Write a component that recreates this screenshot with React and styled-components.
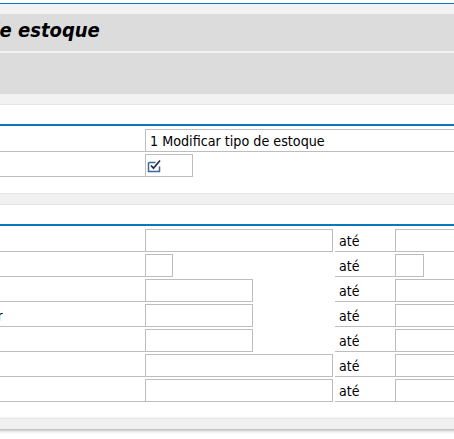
import React from 'react';
import styled, { createGlobalStyle } from 'styled-components';

const SCROLL = 170;

const GlobalStyle = createGlobalStyle`
  html, body {
    margin: 0;
    padding: 0;
    background: #fff;
  }
  body {
    font-family: "DejaVu Sans Condensed", "DejaVu Sans", sans-serif;
    font-size: 14px;
    color: #000;
  }
`;

const Viewport = styled.div`
  width: 454px;
  height: 439px;
  overflow: hidden;
  padding-top: 3px;
  box-sizing: border-box;
`;
const Canvas = styled.div`
  margin-left: -${SCROLL}px;
  width: ${SCROLL + 700}px;
`;
const Header = styled.header`
  border-top: 1px solid #0b76bb;
  background: #f2f2f2;
  padding: 10px 0;
  border-bottom: 1px solid #e5e5e5;
`;
const TitleBar = styled.div`
  height: 37px;
  background: #dcdcdc;
  padding-left: 9px;
`;
const Title = styled.h1`
  margin: 0;
  font-family: "DejaVu Sans Condensed", "DejaVu Sans", sans-serif;
  font-weight: bold;
  font-style: italic;
  font-size: 20px;
  line-height: 32px;
  color: #000;
  white-space: nowrap;
`;
const Toolbar = styled.div`
  height: 41px;
  margin-top: 2px;
  background: #dcdcdc;
`;
const Section = styled.section`
  margin-top: 19px;
  border-top: 2px solid #0b76bb;
  padding-top: 1px;
`;
const Row = styled.div`
  display: flex;
  align-items: flex-end;
  padding-top: 2px;
`;
const Label = styled.label`
  box-sizing: border-box;
  flex: 0 0 ${SCROLL + 145}px;
  height: 23px;
  border-bottom: 1px solid #bdbdbd;
  padding: 2px 0 0 26px;
  line-height: 20px;
  white-space: nowrap;
  overflow: hidden;
`;
const FieldCol = styled.div`
  flex: 0 0 190px;
  display: flex;
`;
const Field = styled.div`
  box-sizing: border-box;
  flex: 0 0 ${p => p.$w}px;
  height: 23px;
  border: 1px solid #bdbdbd;
  background: #fff;
  padding: 1px 4px 0;
  line-height: 21px;
  font-size: 14.2px;
  white-space: nowrap;
  overflow: hidden;
  display: flex;
  align-items: flex-start;
`;
const CheckField = styled(Field)`
  padding: 1px 1px 0;
  align-items: center;
`;
const Ate = styled.div`
  box-sizing: border-box;
  flex: 0 0 60px;
  height: 23px;
  border-bottom: 1px solid #bdbdbd;
  padding: 2px 0 0 4px;
  line-height: 20px;
`;
const Spacer = styled.div`
  height: 16px;
`;
const Band = styled.div`
  height: 10px;
  background: #f0f0f0;
  border-top: 1px solid #e6e6e6;
  border-bottom: 1px solid ${p => (p.$last ? '#c4c4c4' : '#e4e4e4')};
  box-shadow: ${p => (p.$last ? '0 1px 3px rgba(0,0,0,0.25)' : 'none')};
`;

function CheckIcon() {
  return (
    <svg width="15" height="14" viewBox="0 0 15 14">
      <path d="M1.5 3.5 H8.5 M1.5 3.5 V12.5 H12.5 V7.5" fill="none" stroke="#3b6a98" strokeWidth="1.5" />
      <path d="M4 6.5 L6.5 9.2 L13 1.5" fill="none" stroke="#1f2f46" strokeWidth="1.7" />
    </svg>
  );
}

const ranges = [
  { label: 'Material', w1: 188, w2: 188 },
  { label: 'Tipo de estoque', w1: 28, w2: 29 },
  { label: 'Lote', w1: 108, w2: 188 },
  { label: 'Nº conta do fornecedor', w1: 108, w2: 188 },
  { label: 'Cliente', w1: 108, w2: 188 },
  { label: 'Pedido', w1: 188, w2: 188 },
  { label: 'Elemento PEP', w1: 188, w2: 188 },
];

export default function App() {
  return (
    <>
      <GlobalStyle />
      <Viewport>
        <Canvas>
          <Header>
            <TitleBar>
              <Title>Modificar tipo de estoque</Title>
            </TitleBar>
            <Toolbar />
          </Header>

          <Section>
            <Row>
              <Label>Função</Label>
              <Field $w={420}>1 Modificar tipo de estoque</Field>
            </Row>
            <Row>
              <Label>Execução de teste</Label>
              <CheckField $w={48}><CheckIcon /></CheckField>
            </Row>
            <Spacer />
            <Band />
          </Section>

          <Section>
            {ranges.map(r => (
              <Row key={r.label}>
                <Label>{r.label}</Label>
                <FieldCol>
                  <Field $w={r.w1} />
                </FieldCol>
                <Ate>até</Ate>
                <Field $w={r.w2} />
              </Row>
            ))}
            <Spacer />
            <Band $last />
          </Section>
        </Canvas>
      </Viewport>
    </>
  );
}
